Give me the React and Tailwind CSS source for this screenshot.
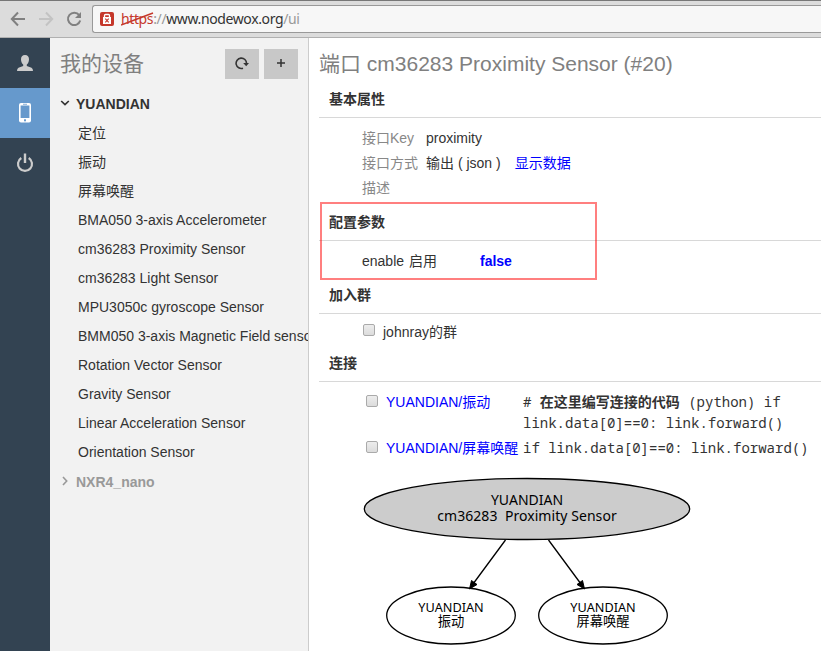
import React from "react";

const sensors = [
  "定位",
  "振动",
  "屏幕唤醒",
  "BMA050 3-axis Accelerometer",
  "cm36283 Proximity Sensor",
  "cm36283 Light Sensor",
  "MPU3050c gyroscope Sensor",
  "BMM050 3-axis Magnetic Field sensor",
  "Rotation Vector Sensor",
  "Gravity Sensor",
  "Linear Acceleration Sensor",
  "Orientation Sensor",
];

function BrowserBar() {
  return (
    <header className="h-[38px] shrink-0 border-t border-b border-t-[#777] border-b-[#b0b0b0] bg-[#dcdcdc] flex items-center">
      <svg className="w-[92px] h-9 shrink-0" viewBox="0 0 92 36" fill="none" strokeWidth="2">
        <path d="M25 18H12M18 11.5L11.8 18L18 24.5" stroke="#808080" />
        <path d="M39 18H52M46 11.5L52.2 18L46 24.5" stroke="#c3c3c3" />
        <path d="M79.2 14.2A6.2 6.2 0 1 0 80.2 19.5" stroke="#808080" />
        <path d="M81 11V17H75Z" fill="#808080" />
      </svg>
      <div className="flex-1 h-7 mb-px border border-r-0 border-[#999] rounded-l-[3px] bg-[#f7f7f7] flex items-center pl-[7px]">
        <svg className="w-[14px] h-[14px] shrink-0" viewBox="0 0 14 14">
          <rect width="14" height="14" rx="2" fill="#c5382b" />
          <path d="M4.5 6V3.5Q4.5 2.5 5.5 2.5H8.5Q9.5 2.5 9.5 3.5V6" fill="none" stroke="#fff" strokeWidth="1.3" />
          <rect x="3" y="5" width="8" height="7" fill="#fff" />
          <path d="M5.3 6.6L8.7 10.4M8.7 6.6L5.3 10.4" stroke="#c5382b" strokeWidth="1.1" />
        </svg>
        <div className="relative ml-[7px] whitespace-nowrap text-[14px] leading-[20px] tracking-[-0.38px] text-[#999]">
          <span className="text-[#c5382b]">https</span>://<span className="text-[#333]">www.nodewox.org</span>/ui
          <svg className="absolute left-0 top-[3px] w-[33px] h-[14px]" viewBox="0 0 33 14">
            <path d="M0 13L32 1" stroke="#c5382b" strokeWidth="1.6" />
          </svg>
        </div>
      </div>
    </header>
  );
}

function NavRail() {
  return (
    <nav className="w-[50px] shrink-0 bg-[#334352] flex flex-col">
      <div className="h-[50px] flex items-center justify-center">
        <svg width="18" height="18" viewBox="0 0 18 18" fill="#ccc">
          <path d="M9 1C6.3 1 5 2.7 5 5.2C5 7.6 6 9.8 7.2 10.6V12L2.5 13.8Q1 14.600 1 17H17Q17 14.600 15.5 13.8L10.800 12V10.6C12 9.8 13 7.6 13 5.2C13 2.7 11.700 1 9 1Z" />
        </svg>
      </div>
      <div className="h-[50px] bg-[#6699cc] flex items-center justify-center">
        <svg width="14" height="20" viewBox="0 0 14 20">
          <rect x="1" y="0" width="12" height="19.500" rx="2" fill="#fff" />
          <rect x="2.600" y="2.500" width="8.800" height="12.500" fill="#6699cc" />
          <rect x="5" y="0.800" width="4" height="0.800" fill="#6699cc" />
          <rect x="6" y="16.300" width="2" height="2" fill="#6699cc" />
        </svg>
      </div>
      <div className="h-[50px] flex items-center justify-center">
        <svg width="18" height="20" viewBox="0 0 18 20" fill="none" stroke="#ccc" strokeWidth="2.2">
          <path d="M5.300 5A7 7 0 1 0 12.700 5" />
          <path d="M9 0.500V10" strokeWidth="2.400" />
        </svg>
      </div>
    </nav>
  );
}

function Sidebar() {
  return (
    <aside className="w-[259px] shrink-0 bg-[#f2f2f2] border-r border-[#ccc] overflow-hidden">
      <div className="h-[52px] pl-[10px] pr-[10px] flex items-center">
        <h2 className="flex-1 text-[21px] text-[#808080]">我的设备</h2>
        <button className="w-[34px] h-[30px] bg-[#c8c8c8] flex items-center justify-center">
          <svg className="-mt-[2px]" width="14" height="14" viewBox="0 0 14 14" fill="none">
            <path d="M8 12.2A5.200 5.200 0 1 1 11.500 7.500" stroke="#333" strokeWidth="1.6" />
            <path d="M8.200 7H14L11.200 10.200Z" fill="#333" />
          </svg>
        </button>
        <button className="ml-[5px] w-[34px] h-[30px] bg-[#c8c8c8] flex items-center justify-center">
          <svg className="-mt-[2px]" width="8" height="8" viewBox="0 0 8 8">
            <path d="M4 0V8M0 4H8" stroke="#333" strokeWidth="1.5" />
          </svg>
        </button>
      </div>
      <div className="h-[29px] pl-[10px] flex items-center font-bold">
        <svg className="mr-[6px] -mt-[3px]" width="10" height="8" viewBox="0 0 10 8" fill="none">
          <path d="M1.200 2L5 5.600L8.800 2" stroke="#333" strokeWidth="1.7" />
        </svg>
        YUANDIAN
      </div>
      <ul>
        {sensors.map((name) => (
          <li key={name} className="h-[29px] pl-7 leading-[29px] whitespace-nowrap">{name}</li>
        ))}
      </ul>
      <div className="h-[31px] pl-[10px] flex items-center font-bold text-[#999]">
        <svg className="mr-[6px] -mt-[3px]" width="10" height="10" viewBox="0 0 10 10" fill="none">
          <path d="M3 1L6.700 5L3 9" stroke="#999" strokeWidth="1.6" />
        </svg>
        NXR4_nano
      </div>
    </aside>
  );
}

function Heading({ children }) {
  return (
    <h3 className="h-[37px] ml-[10px] pl-[10px] leading-[36px] border-b border-[#d8d8d8] font-bold">
      {children}
    </h3>
  );
}

function Checkbox() {
  return (
    <span className="inline-block shrink-0 w-3 h-3 border border-[#aaa] rounded-[2px] bg-linear-to-b from-[#ededed] to-[#dcdcdc]" />
  );
}

function Graph() {
  return (
    <svg className="ml-[50px] w-[340px] h-[176px]" viewBox="359 475 340 176" fontFamily="'Noto Sans', 'Noto Sans CJK SC', sans-serif" textAnchor="middle">
      <g stroke="#000" strokeWidth="1.3" fill="none">
        <ellipse cx="527" cy="509" rx="162.700" ry="30.500" fill="#ccc" />
        <ellipse cx="451" cy="615.500" rx="64.300" ry="28.500" />
        <ellipse cx="603" cy="615.500" rx="64.300" ry="28.500" />
        <path d="M505.500 540L473 584M548.500 540L581 584" />
      </g>
      <path d="M469.500 589L471.500 580.500L477 584.500ZM584.500 589L577 584.500L582.500 580.500Z" stroke="#000" />
      <g fontSize="14">
        <text x="527" y="505">YUANDIAN</text>
        <text x="527" y="521" xmlSpace="preserve" letterSpacing="0.06">cm36283  Proximity Sensor</text>
      </g>
      <g fontSize="12.700">
        <text x="451" y="612">YUANDIAN</text>
        <text x="451" y="626" fontSize="13.300">振动</text>
        <text x="603" y="612">YUANDIAN</text>
        <text x="603" y="626" fontSize="13.300">屏幕唤醒</text>
      </g>
    </svg>
  );
}

function Details() {
  return (
    <main className="flex-1 min-w-0 bg-white overflow-hidden">
      <h1 className="h-[43px] pl-[10px] leading-[52px] text-[21px] text-[#808080] whitespace-nowrap">
        端口 cm36283 Proximity Sensor (#20)
      </h1>
      <Heading>基本属性</Heading>
      <dl className="h-[86px] pt-2 pl-[53px] grid grid-cols-[64px_1fr] auto-rows-[25px] leading-[25px] whitespace-nowrap">
        <dt className="text-[#888]">接口Key</dt>
        <dd>proximity</dd>
        <dt className="text-[#888]">接口方式</dt>
        <dd>输出 ( json )<a className="ml-[14px] text-[#0000ff]">显示数据</a></dd>
        <dt className="text-[#888]">描述</dt>
        <dd />
      </dl>
      <section className="relative">
        <Heading>配置参数</Heading>
        <div className="h-[36px] pl-[53px] flex items-center pt-[4px]">
          <span className="w-[118px] [word-spacing:1px]">enable 启用</span>
          <b className="text-[#0000ff]">false</b>
        </div>
        <div className="absolute left-[11px] -top-[2px] w-[277px] h-[78px] border-2 border-[#ff0000]/50" />
      </section>
      <Heading>加入群</Heading>
      <div className="h-[31px] pl-[54px] pt-[6px] flex items-center">
        <span className="flex mr-2 -mt-[5px]"><Checkbox /></span>
        johnray的群
      </div>
      <Heading>连接</Heading>
      <div className="pt-[10px] pl-[57px] grid grid-cols-[20px_137px_1fr] leading-[21px] whitespace-nowrap">
        <span className="pt-[3px] leading-none"><Checkbox /></span>
        <a className="text-[#0000ff]">YUANDIAN/振动</a>
        <code className="h-[46px] -mt-px mb-px font-['Droid_Sans_Mono','Noto_Sans_Mono','DejaVu_Sans_Mono','Noto_Sans_CJK_SC',monospace] text-[14px]">
          # <b>在这里编写连接的代码</b> (python) if<br />link.data[0]==0: link.forward()
        </code>
        <span className="pt-[3px] leading-none"><Checkbox /></span>
        <a className="text-[#0000ff]">YUANDIAN/屏幕唤醒</a>
        <code className="h-[37px] -mt-px mb-px font-['Droid_Sans_Mono','Noto_Sans_Mono','DejaVu_Sans_Mono','Noto_Sans_CJK_SC',monospace] text-[14px]">
          if link.data[0]==0: link.forward()
        </code>
      </div>
      <Graph />
    </main>
  );
}

export default function App() {
  return (
    <div className="w-[821px] h-[651px] overflow-hidden flex flex-col text-[14px] text-[#333] font-['Liberation_Sans','Noto_Sans_CJK_SC',sans-serif]">
      <div className="font-['Noto_Sans',sans-serif]">
        <BrowserBar />
      </div>
      <div className="flex-1 min-h-0 flex">
        <NavRail />
        <Sidebar />
        <Details />
      </div>
    </div>
  );
}
